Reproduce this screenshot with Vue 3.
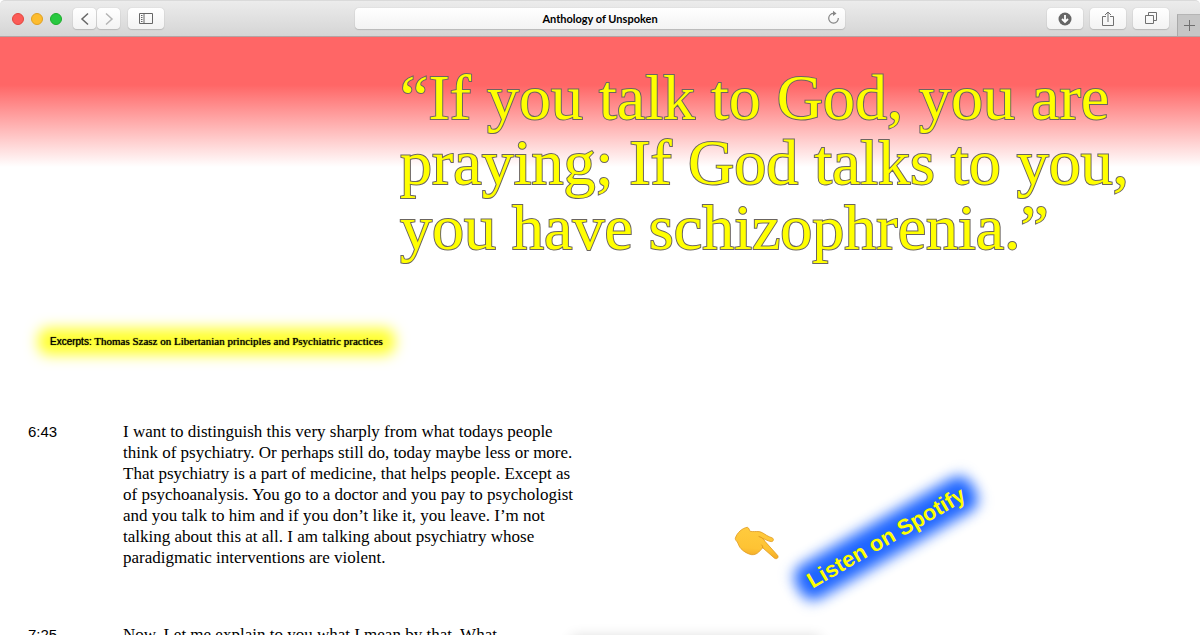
<script setup>
const entries = [
  {
    time: '6:43',
    lines: [
      'I want to distinguish this very sharply from what todays people',
      'think of psychiatry. Or perhaps still do, today maybe less or more.',
      'That psychiatry is a part of medicine, that helps people. Except as',
      'of psychoanalysis. You go to a doctor and you pay to psychologist',
      'and you talk to him and if you don’t like it, you leave. I’m not',
      'talking about this at all. I am talking about psychiatry whose',
      'paradigmatic interventions are violent.',
    ],
  },
  {
    time: '7:25',
    lines: ['Now, Let me explain to you what I mean by that. What'],
  },
]
const quote = [
  '“If you talk to God, you are',
  'praying; If God talks to you,',
  'you have schizophrenia.”',
]
</script>

<template>
  <div class="window">
    <header class="toolbar">
      <div class="lights">
        <button class="light close" aria-label="Close"></button>
        <button class="light minimise" aria-label="Minimise"></button>
        <button class="light expand" aria-label="Full screen"></button>
      </div>
      <div class="history">
        <button class="tool narrow" aria-label="Back">
          <svg width="10" height="14" viewBox="0 0 10 14"><path d="M8 1.500 2 7l6 5.500" fill="none" stroke="#666" stroke-width="1.500" /></svg>
        </button>
        <button class="tool narrow" aria-label="Forward">
          <svg width="10" height="14" viewBox="0 0 10 14"><path d="M2 1.500 8 7l-6 5.500" fill="none" stroke="#b4b4b4" stroke-width="1.500" /></svg>
        </button>
      </div>
      <button class="tool sidebar" aria-label="Show sidebar">
        <svg width="15" height="12" viewBox="0 0 15 12"><path d="M.5.5h13v10H.5zM5 .5v10" fill="none" stroke="#666" /><path d="M2 2.500h1.500M2 4.500h1.500M2 6.500h1.500M2 8.500h1.500" stroke="#666" /></svg>
      </button>
      <div class="address">
        <span class="title">Anthology of Unspoken</span>
        <button class="reload" aria-label="Reload">
          <svg width="13" height="15" viewBox="0 0 13 15"><path d="M7 3.500A4.800 4.800 0 1 0 11.300 8" fill="none" stroke="#858585" stroke-width="1.200" /><path d="M6 .7v5.400L9.500 3.500z" fill="#858585" /></svg>
        </button>
      </div>
      <div class="actions">
        <button class="tool" aria-label="Downloads">
          <svg width="14" height="14" viewBox="0 0 14 14"><circle cx="7" cy="7" r="6.500" fill="#666" /><path d="M7 3v6.500M4 7l3 3 3-3" fill="none" stroke="#fff" stroke-width="1.800" /></svg>
        </button>
        <button class="tool" aria-label="Share">
          <svg width="12" height="16" viewBox="0 0 12 16"><path d="M4 5.500H.5v9h11v-9H8M6 11V1.500M3 4l3-3 3 3" fill="none" stroke="#707070" /></svg>
        </button>
        <button class="tool" aria-label="Show all tabs">
          <svg width="13" height="13" viewBox="0 0 13 13"><path d="M.5 3.500h8v8h-8zM3.500 3.500v-3h8v8h-3" fill="none" stroke="#707070" /></svg>
        </button>
      </div>
      <button class="new-tab" aria-label="New tab">
        <svg width="11" height="11" viewBox="0 0 11 11"><path d="M5.500 0v11M0 5.500h11" stroke="#707070" /></svg>
      </button>
    </header>

    <main class="page">
      <h1 class="quote">
        <span v-for="line in quote" :key="line" class="line">{{ line }}</span>
      </h1>
      <p class="excerpt"><span class="label">Excerpts:</span> Thomas Szasz on Libertanian principles and Psychiatric practices</p>
      <article v-for="entry in entries" :key="entry.time" class="entry">
        <time class="time">{{ entry.time }}</time>
        <p class="speech">
          <span v-for="line in entry.lines" :key="line" class="line">{{ line }}</span>
        </p>
      </article>

      <div class="sticker">
        <svg class="hand" width="46" height="36" viewBox="0 0 46 36" aria-hidden="true">
          <defs>
            <linearGradient id="skin" x1="0.300" y1="0" x2="0.200" y2="1">
              <stop offset="0" stop-color="#ffcb3e" />
              <stop offset="0.650" stop-color="#fec334" />
              <stop offset="1" stop-color="#f0a422" />
            </linearGradient>
          </defs>
          <path d="M13.300 1.300C8.500 2 3 6.500 1.300 12.300c-.2 1.500 1 2.300 2 3.700 1.200 2.200 1.700 4.700 3.700 6.700 3 3.200 7 5.300 10.700 6 3 .2 5.200-.9 7-2.600 1.600-1.500 2.700-3 4-4.300L40.500 32.200c2.300 1.400 4.400-.6 3.200-2.700L31.200 15.600l-2.200-3c2.700 1 5.200 2.500 8 3 2.600.2 3.300-2.700 1.200-3.700-2.200-.9-4-1.400-5.700-2.600-2.400-1.500-4.700-3.300-7.500-3.700-3-.3-6 .3-8.800-.3-1-1-1-3.500-2.900-4z" fill="url(#skin)" stroke="#df9a22" stroke-width=".8" stroke-linejoin="round" />
          <path d="M28.700 21.700c.2-1.200-.3-2-1-2.700M25 10.500c1.500.3 2.800 1.200 4 2.100" fill="none" stroke="#df9a22" stroke-width="1" stroke-linecap="round" />
        </svg>
        <a class="spotify" href="#">Listen on Spotify</a>
      </div>
      <div class="dock-shadow"></div>
    </main>
  </div>
</template>

<style>
body {
  margin: 0;
  background: #fff;
}
</style>

<style scoped>
.window {
  display: flex;
  flex-direction: column;
  height: 100vh;
  overflow: hidden;
  background: #fff;
  color: #000;
}
button {
  padding: 0;
  border: 0;
  background: none;
}
svg {
  display: block;
}
.toolbar {
  display: grid;
  grid-template-columns: auto auto auto minmax(0, 490px) 1fr auto;
  align-items: center;
  flex: none;
  height: 37px;
  box-sizing: border-box;
  border-top: 1px solid #dadada;
  border-bottom: 1px solid #b4a4a4;
  border-radius: 5px 5px 0 0;
  background: linear-gradient(#ececec, #d5d5d5);
}
.lights {
  display: flex;
  gap: 7px;
  padding-left: 12px;
}
.light {
  width: 12px;
  height: 12px;
  box-sizing: border-box;
  border: 1px solid #e2463f;
  border-radius: 50%;
  background: #fc5b57;
}
.minimise {
  border-color: #dfa023;
  background: #fdbc2e;
}
.expand {
  border-color: #1dad2b;
  background: #28c940;
}
.history {
  display: flex;
  gap: 1px;
  padding-left: 11px;
}
.tool {
  display: grid;
  place-items: center;
  width: 36px;
  height: 21px;
  border-radius: 4px;
  background: linear-gradient(#fff, #f3f3f3);
  box-shadow: 0 0 1px #aaa, 0 1px 1px #bbb;
}
.narrow {
  width: 23px;
}
.sidebar {
  margin-left: 8px;
}
.address {
  display: flex;
  align-items: center;
  justify-content: center;
  position: relative;
  height: 21px;
  margin-left: 191px;
  margin-right: -191px;
  border-radius: 4px;
  background: linear-gradient(#fff, #f3f3f3);
  box-shadow: 0 0 1px #aaa, 0 1px 1px #bbb;
}
.title {
  font: 700 11px/20px Lato, sans-serif;
}
.reload {
  position: absolute;
  right: 5px;
  top: 2px;
}
.actions {
  display: flex;
  justify-content: flex-end;
  gap: 7px;
  padding-right: 8px;
}
.new-tab {
  display: grid;
  place-items: center;
  align-self: end;
  width: 23px;
  height: 22px;
  border-left: 1px solid #aaa;
  border-top: 1px solid #b5b5b5;
  background: #c6c6c6;
}
.page {
  position: relative;
  z-index: 0;
  flex: 1;
  min-height: 0;
  overflow: hidden;
  padding: 0 28px;
  background: linear-gradient(#f66 0, #f66 48px, #fff 130px);
}
.line {
  display: block;
  white-space: nowrap;
}
.quote {
  margin: 28px 0 0 372px;
  font: 400 64px/65px "Liberation Serif", serif;
  color: #ff0;
  -webkit-text-stroke: 2px #6b6560;
  paint-order: stroke fill;
}
.excerpt {
  position: relative;
  width: max-content;
  margin: 71px 0 0 22px;
  font: 400 11px/20px "Liberation Serif", serif;
  text-shadow: 0 0 1px #000;
}
.excerpt::before {
  content: "";
  position: absolute;
  inset: -3px -12px;
  z-index: -1;
  border-radius: 10px;
  background: #ffff30;
  filter: blur(7px);
}
.label {
  font: 400 10px/20px "Liberation Sans", sans-serif;
}
.entry {
  display: grid;
  grid-template-columns: 95px 1fr;
  margin-top: 56px;
}
.excerpt + .entry {
  margin-top: 69px;
}
.time {
  font: 400 15px/21px "Liberation Sans", sans-serif;
}
.speech {
  margin: 0;
  font: 400 17px/21px "Liberation Serif", serif;
}
.sticker {
  position: absolute;
  left: 61%;
  top: 486px;
}
.hand {
  position: absolute;
  left: 2px;
  top: 3px;
}
.spotify {
  position: absolute;
  left: 65px;
  top: -1px;
  color: #ff0;
  font: 700 22px/32px "Liberation Sans", sans-serif;
  text-decoration: none;
  white-space: nowrap;
  transform: rotate(-30deg);
}
.spotify::before {
  content: "";
  position: absolute;
  inset: -3px -12px;
  z-index: -1;
  border-radius: 14px;
  background: #1f66ff;
  filter: blur(7px);
}
.dock-shadow {
  position: absolute;
  left: 48%;
  right: 32%;
  bottom: -14px;
  height: 8px;
  box-shadow: 0 0 14px 4px rgba(0, 0, 0, 0.16);
}
</style>
